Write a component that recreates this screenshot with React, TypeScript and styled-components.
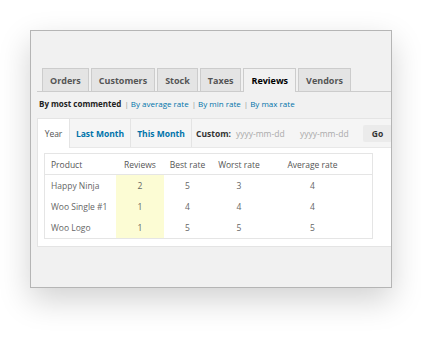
import { createGlobalStyle, styled } from "styled-components";

const Global = createGlobalStyle`
  html, body {
    margin: 0;
    padding: 0;
    background: #fff;
    font-family: "Open Sans", "Liberation Sans", sans-serif;
  }
`

const Stage = styled.div`
  width: 421px;
  height: 343px;
  padding: 30px 0 0 30px;
  box-sizing: border-box;
`
const Frame = styled.div`
  width: 362px;
  height: 258px;
  box-sizing: border-box;
  border: 1px solid #b5b5b5;
  background: #f1f1f1;
  box-shadow: 0 12px 30px rgba(0, 0, 0, 0.18);
  overflow: hidden;
  padding: 36px 0 0 6px;
`
const TabBar = styled.div`
  display: flex;
  align-items: flex-end;
  gap: 2px;
  padding-left: 5px;
  border-bottom: 1px solid #ccc;
  height: 24px;
`
const Tab = styled.div<{ $active?: boolean }>`
  height: ${({ $active }) => ($active ? 24 : 23)}px;
  padding: 0 7px;
  box-sizing: border-box;
  display: flex;
  align-items: center;
  font-size: 9px;
  font-weight: 700;
  color: ${({ $active }) => ($active ? "#000" : "#555")};
  background: ${({ $active }) => ($active ? "#f1f1f1" : "#e4e4e4")};
  border: 1px solid #ccc;
  border-bottom: none;
  margin-bottom: ${({ $active }) => ($active ? -1 : 0)}px;
`
const SubNav = styled.div`
  height: 26px;
  box-sizing: border-box;
  padding: 0 0 4px 2px;
  display: flex;
  align-items: center;
  font-size: 8px;
  color: #0073aa;
  b {
    color: #222;
  }
  span {
    color: #999;
    margin: 0 2px 0 3px;
  }
`
const Panel = styled.div`
  width: 420px;
  background: #fff;
  border: 1px solid #e4e4e4;
  padding-bottom: 7px;
`
const RangeBar = styled.div`
  display: flex;
  align-items: center;
  height: 28px;
  background: #f5f5f5;
  border-bottom: 1px solid #e8e8e8;
`
const RangeTab = styled.div<{ $active?: boolean; $w: number }>`
  width: ${({ $w }) => $w}px;
  height: 100%;
  display: flex;
  align-items: center;
  justify-content: center;
  font-size: 8.5px;
  font-weight: ${({ $active }) => ($active ? 400 : 700)};
  color: ${({ $active }) => ($active ? "#555" : "#0073aa")};
  background: ${({ $active }) => ($active ? "#fff" : "transparent")};
  border-right: 1px solid #e4e4e4;
  margin-bottom: ${({ $active }) => ($active ? -1 : 0)}px;
  padding-bottom: ${({ $active }) => ($active ? 1 : 0)}px;
`
const Custom = styled.div`
  display: flex;
  align-items: center;
  padding-left: 4px;
  font-size: 8.5px;
  font-weight: 700;
  color: #333;
`
const DateField = styled.div`
  width: 64px;
  box-sizing: border-box;
  padding-left: 5px;
  font-size: 8.5px;
  font-weight: 400;
  color: #aaa;
`
const GoButton = styled.div`
  margin-left: 4px;
  width: 29px;
  height: 17px;
  background: #ebebeb;
  border-radius: 2px;
  display: flex;
  align-items: center;
  justify-content: center;
  font-size: 8.5px;
  font-weight: 700;
  color: #333;
`
const Table = styled.div`
  margin: 5px 0 0 6px;
  width: 327px;
  border: 1px solid #e5e5e5;
`
const Row = styled.div<{ $head?: boolean }>`
  display: grid;
  grid-template-columns: 71px 48px 47px 56px 91px 1fr;
  height: 21px;
  box-sizing: border-box;
  border-bottom: ${({ $head }) => ($head ? "1px solid #e5e5e5" : "none")};
  font-size: 8.5px;
  color: ${({ $head }) => ($head ? "#555" : "#666")};
`
const Cell = styled.div<{ $hl?: boolean; $left?: boolean }>`
  display: flex;
  align-items: center;
  justify-content: ${({ $left }) => ($left ? "flex-start" : "center")};
  padding-left: ${({ $left }) => ($left ? 6 : 0)}px;
  background: ${({ $hl }) => ($hl ? "#fcfcd4" : "transparent")};
  white-space: nowrap;
`

const rows = [
  ["Happy Ninja", "2", "5", "3", "4"],
  ["Woo Single #1", "1", "4", "4", "4"],
  ["Woo Logo", "1", "5", "5", "5"],
]

export default function App() {
  return (
    <Stage>
      <Global />
      <Frame>
        <TabBar>
          <Tab>Orders</Tab>
          <Tab>Customers</Tab>
          <Tab>Stock</Tab>
          <Tab>Taxes</Tab>
          <Tab $active>Reviews</Tab>
          <Tab>Vendors</Tab>
        </TabBar>
        <SubNav>
          <b>By most commented</b>
          <span>|</span>By average rate
          <span>|</span>By min rate
          <span>|</span>By max rate
        </SubNav>
        <Panel>
          <RangeBar>
            <RangeTab $active $w={31}>Year</RangeTab>
            <RangeTab $w={60}>Last Month</RangeTab>
            <RangeTab $w={60}>This Month</RangeTab>
            <Custom>
              Custom:
              <DateField>yyyy-mm-dd</DateField>
              <DateField>yyyy-mm-dd</DateField>
              <GoButton>Go</GoButton>
            </Custom>
          </RangeBar>
          <Table>
            <Row $head>
              <Cell $left>Product</Cell>
              <Cell>Reviews</Cell>
              <Cell>Best rate</Cell>
              <Cell>Worst rate</Cell>
              <Cell>Average rate</Cell>
              <Cell />
            </Row>
            {rows.map((r) => (
              <Row key={r[0]}>
                <Cell $left>{r[0]}</Cell>
                <Cell $hl>{r[1]}</Cell>
                <Cell>{r[2]}</Cell>
                <Cell>{r[3]}</Cell>
                <Cell>{r[4]}</Cell>
                <Cell />
              </Row>
            ))}
          </Table>
        </Panel>
      </Frame>
    </Stage>
  )
}
